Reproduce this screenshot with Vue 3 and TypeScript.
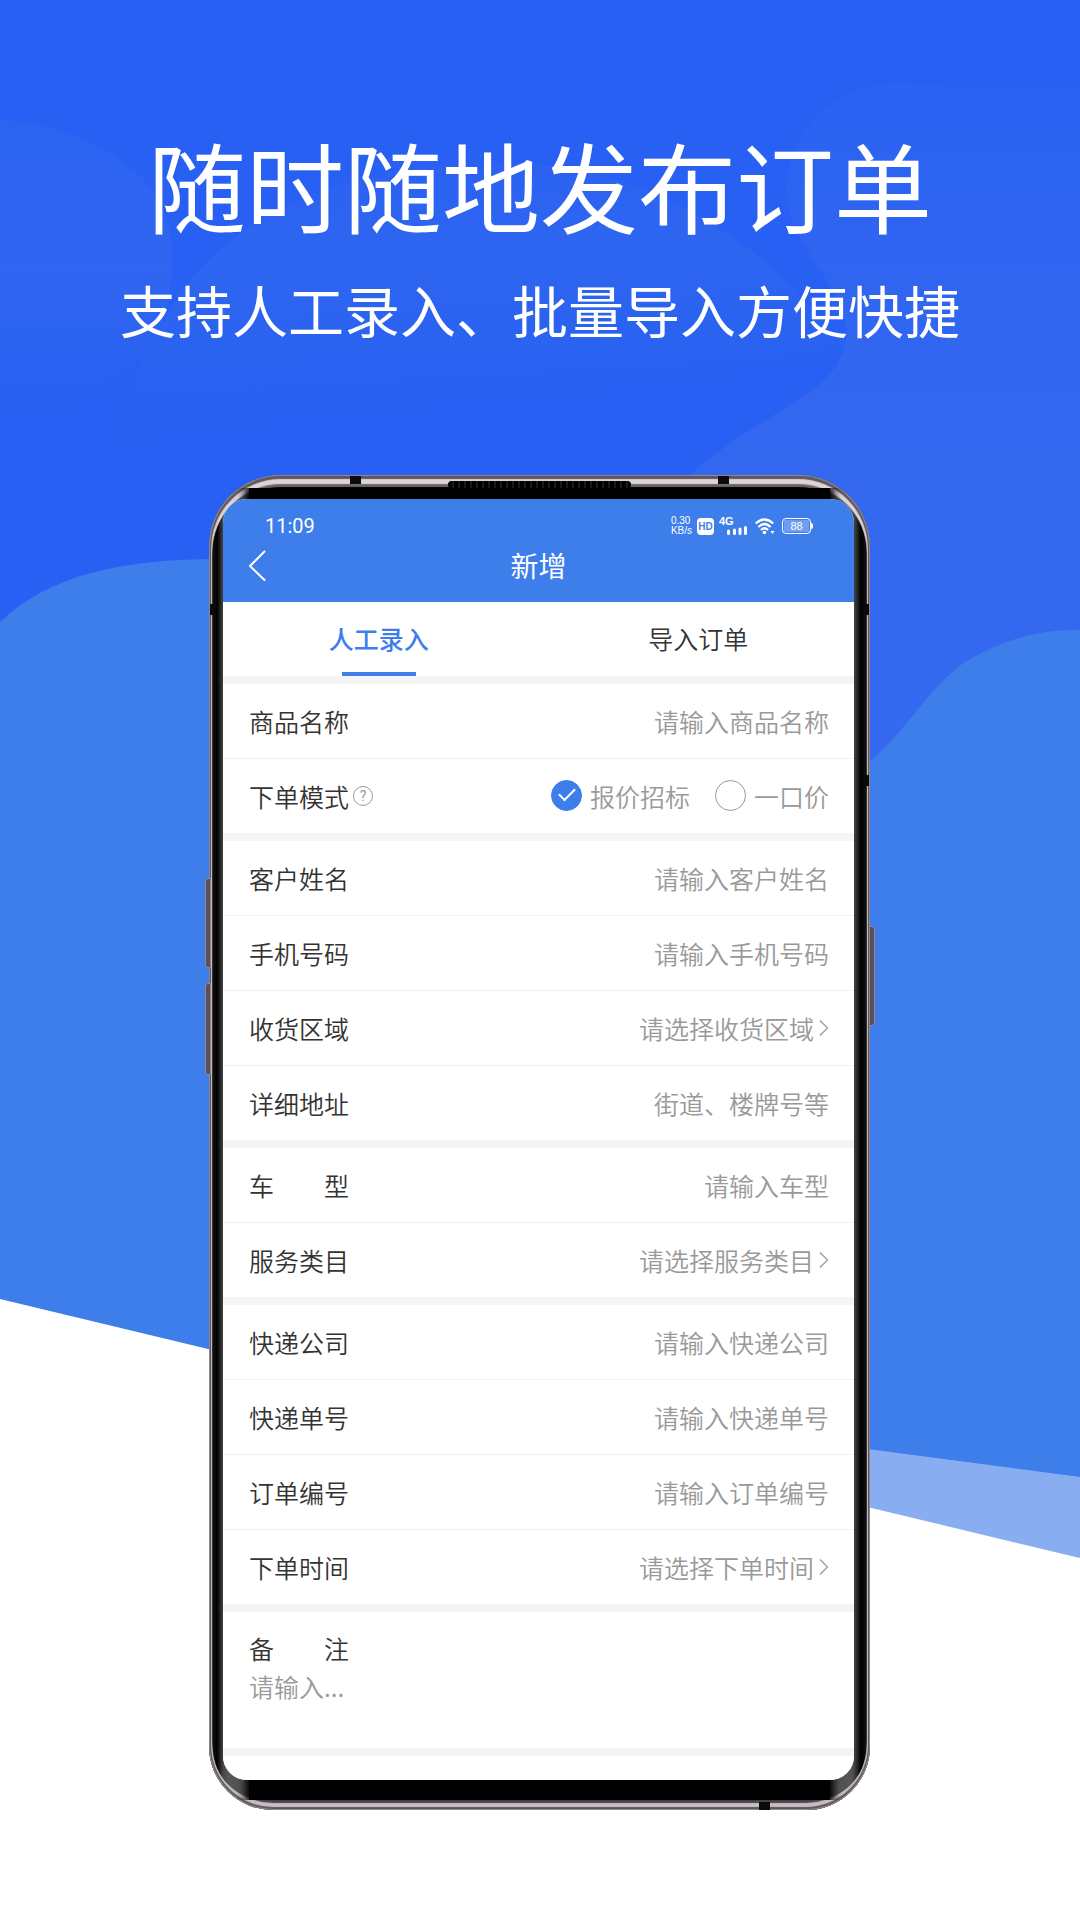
<script setup lang="ts">
import { ref } from 'vue'

type FieldKind = 'input' | 'select' | 'mode'

interface Field {
  id: string
  label: string
  hint: string
  kind: FieldKind
}

const groups: Field[][] = [
  [
    { id: 'goods', label: '商品名称', hint: '请输入商品名称', kind: 'input' },
    { id: 'mode', label: '下单模式', hint: '', kind: 'mode' },
  ],
  [
    { id: 'customer', label: '客户姓名', hint: '请输入客户姓名', kind: 'input' },
    { id: 'mobile', label: '手机号码', hint: '请输入手机号码', kind: 'input' },
    { id: 'area', label: '收货区域', hint: '请选择收货区域', kind: 'select' },
    { id: 'address', label: '详细地址', hint: '街道、楼牌号等', kind: 'input' },
  ],
  [
    { id: 'car', label: '车\u3000\u3000型', hint: '请输入车型', kind: 'input' },
    { id: 'service', label: '服务类目', hint: '请选择服务类目', kind: 'select' },
  ],
  [
    { id: 'express', label: '快递公司', hint: '请输入快递公司', kind: 'input' },
    { id: 'expressNo', label: '快递单号', hint: '请输入快递单号', kind: 'input' },
    { id: 'orderNo', label: '订单编号', hint: '请输入订单编号', kind: 'input' },
    { id: 'orderTime', label: '下单时间', hint: '请选择下单时间', kind: 'select' },
  ],
]

const modes = [
  { value: 'bid', text: '报价招标' },
  { value: 'fixed', text: '一口价' },
]
const mode = ref('bid')

const tabs = ['人工录入', '导入订单']
const activeTab = ref(0)
</script>

<template>
  <main class="page">
    <svg class="backdrop" viewBox="0 0 1080 1920" preserveAspectRatio="none" aria-hidden="true">
      <defs>
        <linearGradient id="blobRight" x1="0" y1="0" x2="0" y2="1">
          <stop offset="0" stop-color="#2a62f2" />
          <stop offset="0.4" stop-color="#3367ef" />
          <stop offset="1" stop-color="#3569ee" />
        </linearGradient>
        <linearGradient id="blobLeft" x1="0" y1="0" x2="0" y2="1">
          <stop offset="0" stop-color="#2c63f1" />
          <stop offset="0.5" stop-color="#2f65f0" />
          <stop offset="1" stop-color="#2760f2" />
        </linearGradient>
        <linearGradient id="blobMid" x1="0" y1="0" x2="0.15" y2="1">
          <stop offset="0" stop-color="#2a61f2" />
          <stop offset="0.4" stop-color="#2e65f0" />
          <stop offset="1" stop-color="#2760f2" />
        </linearGradient>
      </defs>
      <rect width="1080" height="1920" fill="#2760f2" />
      <path d="M0 120C60 123 115 148 147 183C171 212 178 250 168 300C158 350 120 400 0 420Z" fill="url(#blobLeft)" />
      <path d="M110 440C150 340 180 250 300 200C420 150 570 150 670 200C740 235 790 280 810 310L848 345C700 390 300 400 110 440Z" fill="url(#blobMid)" />
      <path d="M1080 88C1000 93 950 84 895 83C835 86 800 122 789 170C778 225 812 250 834 294C862 345 838 375 795 402C750 430 715 450 680 484V900H1080Z" fill="url(#blobRight)" />
      <path d="M0 622C50 575 120 559 220 559V1000H700L830 790C900 750 915 700 962 664C1000 640 1040 629 1080 630V1560H0Z" fill="#3e7eea" />
      <path d="M860 1448L1080 1477V1560H860Z" fill="#88adf0" />
      <path d="M0 1299L1080 1558V1920H0Z" fill="#fff" />
    </svg>

    <header class="hero">
      <h1>随时随地发布订单</h1>
      <p>支持人工录入、批量导入方便快捷</p>
    </header>

    <section class="phone">
      <span class="key key-up"></span>
      <span class="key key-down"></span>
      <span class="key key-power"></span>
      <span class="glass"></span>
      <span class="speaker"></span>
      <span class="band band-top-left"></span>
      <span class="band band-top-right"></span>
      <span class="band band-bottom"></span>
      <span class="band band-left"></span>
      <span class="band band-right"></span>
      <span class="band band-right-low"></span>

      <div class="screen">
        <div class="topbar">
          <div class="status">
            <span class="clock">11:09</span>
            <div class="indicators">
              <span class="speed">0.30<br />KB/s</span>
              <span class="hd">HD</span>
              <span class="signal">
                <span class="net">4G</span>
                <svg width="20" height="9" viewBox="0 0 20 9" aria-hidden="true">
                  <path d="M1.500 5V7.500M7.500 4V7.500M13 3V7.500M18.500 1.500V7.500" stroke="#fff" stroke-width="3" stroke-linecap="round" />
                </svg>
              </span>
              <svg class="wifi" width="20" height="17" viewBox="0 0 20 17" aria-hidden="true">
                <g fill="none" stroke="#fff" stroke-width="2.200">
                  <path d="M0.800 5.500Q9.500 -2.500 18.200 5.500" />
                  <path d="M3.400 9Q9.500 3 15.600 9" />
                  <path d="M6 12Q9.500 8.500 13 12" />
                </g>
                <circle cx="9.500" cy="14.500" r="1.800" fill="#fff" />
                <path d="M15.500 13H19.500L17.500 16Z" fill="#fff" />
              </svg>
              <span class="battery"><span>88</span></span>
            </div>
          </div>
          <div class="nav">
            <button class="back" type="button" aria-label="返回">
              <svg width="18" height="32" viewBox="0 0 18 32" aria-hidden="true">
                <path d="M15.500 1.500L1 16L15.500 30" fill="none" stroke="#fff" stroke-width="2" stroke-linecap="round" />
              </svg>
            </button>
            <h2>新增</h2>
          </div>
        </div>

        <div class="tabs" role="tablist">
          <button
            v-for="(tab, i) in tabs"
            :key="tab"
            type="button"
            role="tab"
            class="tab"
            :class="{ active: i === activeTab }"
            :aria-selected="i === activeTab"
            @click="activeTab = i"
          >
            {{ tab }}
          </button>
        </div>

        <form class="form" @submit.prevent>
          <div v-for="(group, g) in groups" :key="g" class="group">
            <div v-for="field in group" :key="field.id" class="row">
              <template v-if="field.kind === 'mode'">
                <span class="label">{{ field.label }}</span>
                <button class="help" type="button" aria-label="下单模式说明">?</button>
                <div class="options" role="radiogroup" :aria-label="field.label">
                  <label v-for="m in modes" :key="m.value" class="option">
                    <input v-model="mode" type="radio" name="mode" :value="m.value" />
                    <span>{{ m.text }}</span>
                  </label>
                </div>
              </template>
              <template v-else>
                <label class="label" :for="field.id">{{ field.label }}</label>
                <input
                  v-if="field.kind === 'input'"
                  :id="field.id"
                  class="control"
                  type="text"
                  :placeholder="field.hint"
                />
                <template v-else>
                  <select :id="field.id" class="control">
                    <option>{{ field.hint }}</option>
                  </select>
                  <svg class="chevron" width="10" height="18" viewBox="0 0 10 18" aria-hidden="true">
                    <path d="M1 1.500L8.500 9L1 16.500" fill="none" stroke="#999" stroke-width="1.200" />
                  </svg>
                </template>
              </template>
            </div>
          </div>
          <div class="memo">
            <label class="label" for="memo">备&#12288;&#12288;注</label>
            <textarea id="memo" placeholder="请输入..."></textarea>
          </div>
          <div class="tail"></div>
        </form>
      </div>
    </section>
  </main>
</template>

<style>
body {
  margin: 0;
}
</style>

<style scoped>
.page {
  position: relative;
  box-sizing: border-box;
  min-height: 100vh;
  padding: 123px 0 110px;
  overflow: hidden;
  font-family: 'Noto Sans CJK SC', sans-serif;
  color: #333;
}

.page *,
.page *::before,
.page *::after {
  box-sizing: border-box;
}

button,
input,
select,
textarea {
  margin: 0;
  padding: 0;
  border: 0;
  outline: 0;
  background: none;
  font: inherit;
  color: inherit;
  border-radius: 0;
}

.backdrop {
  position: absolute;
  inset: 0;
  width: 100%;
  height: 100%;
}

.hero {
  position: relative;
  color: #fff;
  text-align: center;
}

.hero h1 {
  margin: 0;
  font-size: 98px;
  font-weight: 400;
  line-height: 120px;
}

.hero p {
  margin: 26px 0 126px;
  font-size: 56px;
  font-weight: 400;
  line-height: 80px;
}

.phone {
  position: relative;
  margin: 0 210px 0 209px;
  padding: 24px 16px 30px 14px;
  border-radius: 72px 72px 64px 64px;
  background: #000;
  box-shadow:
    inset 0 0 0 1px #8f878c,
    inset 0 2px 1px 2px #5f565b,
    inset 0 -1px 1px 2px #5f565b,
    inset 0 6px 1px 3px #dcd5dc,
    inset 0 -4px 1px 3px #c6bfc8,
    inset 0 9px 1px 3px #6b6569,
    inset 0 -7px 1px 3px #4b4449;
}

.glass {
  position: absolute;
  inset: 13px 4px 10px;
  border-radius: 62px 62px 52px 52px;
  background: linear-gradient(to right, #111 0, #000 4px, #444 10px, #555 14px, #555 calc(100% - 14px), #333 calc(100% - 10px), #000 calc(100% - 5px), #111 100%);
}

.glass::after {
  content: '';
  position: absolute;
  inset: 0 36px;
  background: #000;
  box-shadow: 0 0 8px 4px #000;
  clip-path: inset(0 -20px);
}

.key {
  position: absolute;
  width: 6px;
  border: 1px solid #8f878c;
  background: #5b5058;
}

.key-up {
  top: 403px;
  left: -4px;
  height: 90px;
  border-radius: 3px 0 0 3px;
}

.key-down {
  top: 508px;
  left: -4px;
  height: 92px;
  border-radius: 3px 0 0 3px;
}

.key-power {
  top: 451px;
  right: -5px;
  height: 100px;
  border-radius: 0 3px 3px 0;
}

.speaker {
  position: absolute;
  top: 6px;
  left: 239px;
  right: 239px;
  height: 7px;
  border-radius: 4px;
  background: repeating-linear-gradient(to right, #000 0, #000 4px, #1a1a1a 4px, #1a1a1a 6px);
}

.band {
  position: absolute;
  background: #0a0a0a;
}

.band-top-left,
.band-top-right {
  top: 1px;
  width: 11px;
  height: 8px;
}

.band-top-left {
  left: 141px;
}

.band-top-right {
  right: 141px;
}

.band-bottom {
  right: 100px;
  bottom: 0;
  width: 11px;
  height: 8px;
}

.band-left,
.band-right,
.band-right-low {
  width: 4px;
  height: 11px;
}

.band-left {
  top: 129px;
  left: 1px;
}

.band-right {
  top: 129px;
  right: 1px;
}

.band-right-low {
  top: 300px;
  right: 1px;
}

.screen {
  position: relative;
  overflow: hidden;
  border-radius: 24px;
  background: #f4f4f4;
  font-size: 25px;
  font-weight: 350;
}

.topbar {
  padding: 14px 26px 11px;
  background: #3e7eea;
  color: #fff;
}

.status {
  display: flex;
  align-items: center;
  justify-content: space-between;
  height: 26px;
  padding: 0 17px 0 16px;
}

.clock {
  font: 400 20px/24px Roboto, sans-serif;
}

.indicators {
  display: flex;
  align-items: center;
  gap: 5px;
}

.speed {
  font: 10px/10px 'Liberation Sans', sans-serif;
}

.hd {
  width: 17px;
  height: 17px;
  border-radius: 4px;
  background: #fff;
  color: #3e7eea;
  font: 700 10px/17px 'Liberation Sans', sans-serif;
  text-align: center;
}

.signal {
  display: flex;
  flex-direction: column;
  width: 28px;
  height: 18px;
}

.signal svg {
  align-self: flex-end;
}

.net {
  font: 700 11px/9px 'Liberation Sans', sans-serif;
}

.wifi {
  margin: 0 1px 0 3px;
}

.battery {
  position: relative;
  width: 29px;
  height: 16px;
  margin-left: 1px;
  padding: 1px;
  border: 1px solid #fff;
  border-radius: 4px;
}

.battery span {
  display: block;
  height: 12px;
  background: rgba(255, 255, 255, 0.25);
  font: 11px/13px 'Liberation Sans', sans-serif;
  text-align: center;
}

.battery::after {
  content: '';
  position: absolute;
  top: 4px;
  right: -3px;
  width: 2px;
  height: 6px;
  border-radius: 0 2px 2px 0;
  background: #fff;
}

.nav {
  display: grid;
  grid-template-columns: 18px 1fr 18px;
  align-items: center;
  height: 52px;
}

.back {
  height: 32px;
}

.back svg {
  display: block;
}

.nav h2 {
  margin: 0;
  font-size: 28px;
  font-weight: 400;
  line-height: 52px;
  height: 54px;
  text-align: center;
}

.tabs {
  display: flex;
  height: 74px;
  margin: 0 -4px 8px;
  background: #fff;
}

.tab {
  position: relative;
  flex: 1;
  height: 74px;
  padding-bottom: 2px;
  line-height: 72px;
}

.tab.active {
  color: #3e7eea;
  font-weight: 500;
}

.tab.active::after {
  content: '';
  position: absolute;
  bottom: 0;
  left: 50%;
  width: 74px;
  height: 4px;
  margin-left: -37px;
  background: #3e7eea;
}

.group {
  margin-bottom: 8px;
  background: #fff;
}

.row {
  display: flex;
  align-items: center;
  height: 74px;
  padding: 0 25px 0 26px;
}

.row + .row {
  height: 75px;
  padding-bottom: 1px;
  border-top: 1px solid #f1f1f1;
}

.label {
  flex: none;
  line-height: 38px;
}

.control {
  flex: 1;
  min-width: 0;
  height: 38px;
  color: #999;
  line-height: 38px;
  text-align: right;
}

.control::placeholder,
textarea::placeholder {
  color: #999;
  opacity: 1;
}

select.control {
  appearance: none;
  text-align-last: right;
}

.chevron {
  flex: none;
  margin-left: 5px;
}

.help {
  width: 20px;
  height: 20px;
  margin-left: 4px;
  border: 1px solid #999;
  border-radius: 50%;
  color: #999;
  font: 14px/18px Roboto, sans-serif;
}

.options {
  display: flex;
  gap: 25px;
  margin-left: auto;
  color: #999;
}

.option {
  display: flex;
  align-items: center;
  gap: 8px;
  line-height: 38px;
}

.option input {
  position: relative;
  appearance: none;
  width: 31px;
  height: 31px;
  border: 1px solid #999;
  border-radius: 50%;
}

.option input:checked {
  border-color: #3e7eea;
  background: #3e7eea;
}

.option input:checked::after {
  content: '';
  position: absolute;
  top: 7px;
  left: 7px;
  width: 16px;
  height: 9px;
  border: solid #fff;
  border-width: 0 0 2px 2px;
  transform: rotate(-45deg);
}

.memo {
  display: flex;
  flex-direction: column;
  margin-bottom: 8px;
  padding: 17px 26px 0;
  background: #fff;
}

.memo textarea {
  height: 81px;
  resize: none;
  line-height: 38px;
}

.tail {
  height: 24px;
  background: #fff;
}

@media (max-width: 900px) {
  .phone {
    margin: 0 24px;
  }

  .hero h1 {
    font-size: 56px;
  }

  .hero p {
    font-size: 28px;
  }
}
</style>
